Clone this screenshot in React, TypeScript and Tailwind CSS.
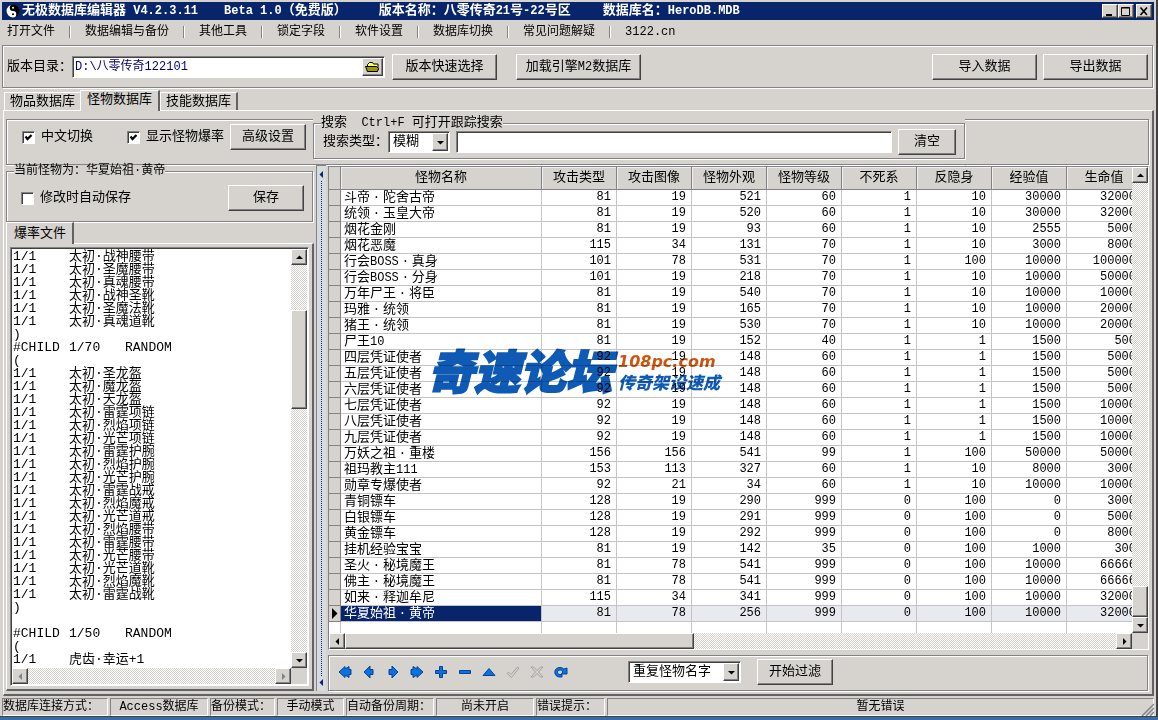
import { useState, type ReactNode } from "react";

type Monster = [string, number, number, number, number, number, number, number, number];

const columns = ["怪物名称", "攻击类型", "攻击图像", "怪物外观", "怪物等级", "不死系", "反隐身", "经验值", "生命值"];

const monsters: Monster[] = [
  ["斗帝·陀舍古帝", 81, 19, 521, 60, 1, 10, 30000, 32000],
  ["统领·玉皇大帝", 81, 19, 520, 60, 1, 10, 30000, 32000],
  ["烟花金刚", 81, 19, 93, 60, 1, 10, 2555, 5000],
  ["烟花恶魔", 115, 34, 131, 70, 1, 10, 3000, 8000],
  ["行会BOSS·真身", 101, 78, 531, 70, 1, 100, 10000, 100000],
  ["行会BOSS·分身", 101, 19, 218, 70, 1, 10, 10000, 50000],
  ["万年尸王·将臣", 81, 19, 540, 70, 1, 10, 10000, 10000],
  ["玛雅·统领", 81, 19, 165, 70, 1, 10, 10000, 20000],
  ["猪王·统领", 81, 19, 530, 70, 1, 10, 10000, 20000],
  ["尸王10", 81, 19, 152, 40, 1, 1, 1500, 500],
  ["四层凭证使者", 92, 19, 148, 60, 1, 1, 1500, 5000],
  ["五层凭证使者", 92, 19, 148, 60, 1, 1, 1500, 5000],
  ["六层凭证使者", 92, 19, 148, 60, 1, 1, 1500, 5000],
  ["七层凭证使者", 92, 19, 148, 60, 1, 1, 1500, 10000],
  ["八层凭证使者", 92, 19, 148, 60, 1, 1, 1500, 10000],
  ["九层凭证使者", 92, 19, 148, 60, 1, 1, 1500, 10000],
  ["万妖之祖·重楼", 156, 156, 541, 99, 1, 100, 50000, 50000],
  ["祖玛教主111", 153, 113, 327, 60, 1, 10, 8000, 3000],
  ["勋章专爆使者", 92, 21, 34, 60, 1, 10, 10000, 10000],
  ["青铜镖车", 128, 19, 290, 999, 0, 100, 0, 3000],
  ["白银镖车", 128, 19, 291, 999, 0, 100, 0, 5000],
  ["黄金镖车", 128, 19, 292, 999, 0, 100, 0, 8000],
  ["挂机经验宝宝", 81, 19, 142, 35, 0, 100, 1000, 300],
  ["圣火·秘境魔王", 81, 78, 541, 999, 0, 100, 10000, 66666],
  ["佛主·秘境魔王", 81, 78, 541, 999, 0, 100, 10000, 66666],
  ["如来·释迦牟尼", 115, 34, 341, 999, 0, 100, 10000, 32000],
  ["华夏始祖·黄帝", 81, 78, 256, 999, 0, 100, 10000, 32000],
];

const drops = (names: string[]) => names.map((n) => `1/1\t${n}`);

const dropFile = [
  ...drops(["太初·战神腰带", "太初·圣魔腰带", "太初·真魂腰带", "太初·战神圣靴", "太初·圣魔法靴", "太初·真魂道靴"]),
  ")",
  "#CHILD\t1/70\tRANDOM",
  "(",
  ...drops([
    "太初·圣龙盔", "太初·魔龙盔", "太初·天龙盔",
    "太初·雷霆项链", "太初·烈焰项链", "太初·光芒项链",
    "太初·雷霆护腕", "太初·烈焰护腕", "太初·光芒护腕",
    "太初·雷霆战戒", "太初·烈焰魔戒", "太初·光芒道戒",
    "太初·烈焰腰带", "太初·雷霆腰带", "太初·光芒腰带",
    "太初·光芒道靴", "太初·烈焰魔靴", "太初·雷霆战靴",
  ]),
  ")",
  "",
  "#CHILD\t1/50\tRANDOM",
  "(",
  ...drops(["虎齿·幸运+1"]),
].join("\n");

const menus = ["打开文件", "数据编辑与备份", "其他工具", "锁定字段", "软件设置", "数据库切换", "常见问题解疑", "3122.cn"];

const raised =
  "bg-[#d6d3ce] border border-t-white border-l-white border-r-[#424142] border-b-[#424142] shadow-[inset_-1px_-1px_0_#848284]";
const sunken =
  "border border-t-[#848284] border-l-[#848284] border-r-white border-b-white shadow-[inset_1px_1px_0_#424142]";
const etched = "border border-[#848284] shadow-[1px_1px_0_#fff,inset_1px_1px_0_#fff]";
const hatch =
  "bg-[conic-gradient(#fff_25%,#d6d3ce_0_50%,#fff_0_75%,#d6d3ce_0)] bg-[length:2px_2px]";

// Latin runs are one size smaller than the Chinese, the dot takes a full cell
function Mixed({ text }: { text: string }) {
  return (
    <>
      {text.split(/([\x20-\x7e]+|·)/).map((part, i) => {
        if (part === "·") return <span key={i} className="inline-block w-[13px] text-center leading-none">·</span>;
        if (/^[\x20-\x7e]+$/.test(part)) return <span key={i} className="whitespace-pre text-[12px] leading-none">{part}</span>;
        return part;
      })}
    </>
  );
}

function Button({ className = "", children }: { className?: string; children: ReactNode }) {
  return (
    <button type="button" className={`${raised} h-[26px] shrink-0 whitespace-nowrap text-[13px] leading-[20px] ${className}`}>
      {children}
    </button>
  );
}

const arrowPoints = {
  up: "3,8 10,8 6.5,4.5",
  down: "3,5 10,5 6.5,8.5",
  left: "8,3 8,10 4.5,6.5",
  right: "5,3 5,10 8.5,6.5",
};

function Arrow({ dir, color = "#000" }: { dir: keyof typeof arrowPoints; color?: string }) {
  return (
    <svg width="13" height="13" viewBox="0 0 13 13" className="shrink-0" aria-hidden="true">
      <polygon points={arrowPoints[dir]} fill={color} />
    </svg>
  );
}

function ScrollButton({ dir, disabled = false }: { dir: keyof typeof arrowPoints; disabled?: boolean }) {
  return (
    <button
      type="button"
      disabled={disabled}
      aria-label={dir}
      className={`${raised} flex size-4 shrink-0 items-center justify-center overflow-hidden`}
    >
      <Arrow dir={dir} color={disabled ? "#848284" : "#000"} />
    </button>
  );
}

function Check({ label, defaultChecked = false }: { label: string; defaultChecked?: boolean }) {
  return (
    <label className="flex items-center gap-[6px] whitespace-nowrap text-[13px]">
      <span className="relative flex">
        <input
          type="checkbox"
          defaultChecked={defaultChecked}
          className={`${sunken} peer size-[13px] appearance-none bg-white`}
        />
        <svg
          className="pointer-events-none absolute inset-0 hidden peer-checked:block"
          width="13" height="13" viewBox="0 0 13 13" fill="none" aria-hidden="true"
        >
          <path d="M3.5 5.5 5.5 8 9.5 4" stroke="#000" strokeWidth="2.2" />
        </svg>
      </span>
      {label}
    </label>
  );
}

function Combo({ label, options, className }: { label: string; options: string[]; className: string }) {
  return (
    <div className={`${sunken} relative flex h-[22px] shrink-0 bg-white p-px ${className}`}>
      <select aria-label={label} className="w-full appearance-none pl-[3px] text-[13px] leading-[18px] outline-none">
        {options.map((o) => (
          <option key={o}>{o}</option>
        ))}
      </select>
      <span className={`${raised} pointer-events-none absolute inset-y-px right-px flex w-4 items-center justify-center`}>
        <Arrow dir="down" />
      </span>
    </div>
  );
}

function TitleBar() {
  const box = `${raised} flex h-[14px] w-4 items-center justify-center`;
  return (
    <header className="flex h-[18px] items-center whitespace-nowrap bg-[#08246b] pl-1 pr-[2px] text-[13px] font-bold leading-[18px] text-white">
      <svg width="14" height="14" viewBox="0 0 14 14" className="mr-[2px] shrink-0" aria-hidden="true">
        <circle cx="7" cy="7" r="6.5" fill="#000" />
        <path d="M7 .5a6.500 6.500 0 0 0 0 13 3.250 3.250 0 0 0 0-6.500 3.250 3.250 0 0 1 0-6.500Z" fill="#fff" />
        <circle cx="7" cy="3.800" r="1" fill="#fff" />
        <circle cx="7" cy="10.200" r="1" fill="#000" />
      </svg>
      <h1 className="flex">
        <span><Mixed text="无极数据库编辑器 V4.2.3.11" /></span>
        <span className="ml-[26px]"><Mixed text="Beta 1.0（免费版）" /></span>
        <span className="ml-8"><Mixed text="版本名称：八零传奇21号-22号区" /></span>
        <span className="ml-8"><Mixed text="数据库名：HeroDB.MDB" /></span>
      </h1>
      <div className="ml-auto flex">
        <button type="button" aria-label="最小化" className={box}>
          <svg width="10" height="10"><rect x="1" y="8" width="6" height="2" fill="#000" /></svg>
        </button>
        <button type="button" aria-label="最大化" className={box}>
          <svg width="10" height="10" fill="none" stroke="#000">
            <path d="M.5 1.500h8v8h-8zM.5 2h8" />
          </svg>
        </button>
        <button type="button" aria-label="关闭" className={`${box} ml-[2px]`}>
          <svg width="10" height="10"><path d="M1.500 1.500 8 9M8 1.500 1.500 9" stroke="#000" strokeWidth="1.600" /></svg>
        </button>
      </div>
    </header>
  );
}

function Menu() {
  return (
    <nav className="flex h-[23px] items-center text-[12px] leading-5">
      {menus.map((m, i) => (
        <div key={m} className="flex items-center">
          {i > 0 && <span className="h-3 w-[2px] border-l border-r border-l-[#848284] border-r-white" />}
          <button type="button" className={`whitespace-nowrap pr-[14px] ${i === 0 ? "pl-[5px]" : "pl-[14px]"}`}>{m}</button>
        </div>
      ))}
    </nav>
  );
}

function Toolbar() {
  return (
    <div className={`${etched} mt-[2px] mr-px flex h-[43px] items-center px-1`}>
      <label htmlFor="dir" className="whitespace-nowrap text-[13px]">版本目录：</label>
      <div className={`${sunken} flex h-[22px] w-[313px] bg-white p-px`}>
        <input id="dir" defaultValue="D:\八零传奇122101" className="min-w-0 flex-1 pl-px text-[12px] text-[#00007b] outline-none" />
        <button type="button" aria-label="浏览" className={`${raised} flex w-[21px] items-center justify-center`}>
          <svg width="15" height="12" viewBox="0 0 15 12" aria-hidden="true">
            <path d="M2.500 10.500v-7l2-2h3l1 1.500h4.500v6" fill="#ffff63" stroke="#000" />
            <path d="M2.500 10.500 .5 5.500h11l2 2-1 3Z" fill="#9c9a00" stroke="#000" />
          </svg>
        </button>
      </div>
      <Button className="ml-[7px] w-[105px]">版本快速选择</Button>
      <Button className="ml-[19px] w-[125px]"><Mixed text="加载引擎M2数据库" /></Button>
      <Button className="ml-auto w-[105px]">导入数据</Button>
      <Button className="ml-[6px] w-[105px]">导出数据</Button>
    </div>
  );
}

function PageTabs() {
  const [active, setActive] = useState(1);
  return (
    <div role="tablist" className="mt-[2px] flex h-5 items-end pl-[2px] text-[13px]">
      {["物品数据库", "怪物数据库", "技能数据库"].map((t, i) => (
        <button
          key={t}
          type="button"
          role="tab"
          aria-selected={i === active}
          onClick={() => setActive(i)}
          className={`whitespace-nowrap border-l border-t border-l-white border-t-white border-r-[#636163] leading-[15px] ${
            i === active ? "relative z-10 -mb-px h-[21px] border-r-2 bg-[#d6d3ce] px-[6px] pb-1" : "h-[18px] px-[5px]"
          } ${i > active ? "border-r-2" : ""}`}
        >
          {t}
        </button>
      ))}
    </div>
  );
}

function TopRow() {
  return (
    <div className="flex h-[54px] items-end">
      <div className="flex h-[46px] w-[307px] shrink-0 items-start border-b border-l border-t border-[#848284] pl-[15px] pt-1 shadow-[0_1px_0_#fff,inset_1px_1px_0_#fff]">
        <div className="flex h-[26px] items-center gap-[6px]">
          <Check label="中文切换" defaultChecked />
          <div className="w-[22px]" />
          <Check label="显示怪物爆率" defaultChecked />
          <Button className="w-[76px]">高级设置</Button>
        </div>
      </div>
      <div className="h-full min-w-0 flex-1 border-b border-[#848284] pt-[6px] shadow-[0_1px_0_#fff]">
        <fieldset className={`${etched} h-[42px] px-2`}>
          <legend className="-ml-px bg-[#d6d3ce] text-[13px] leading-[12px]">
            <Mixed text="搜索  Ctrl+F 可打开跟踪搜索" />
          </legend>
          <div className="flex items-center">
            <label htmlFor="keyword" className="whitespace-nowrap pl-px text-[13px]">搜索类型：</label>
            <Combo label="搜索类型" options={["模糊", "精确"]} className="w-[62px]" />
            <input id="keyword" className={`${sunken} ml-[6px] h-[22px] min-w-0 flex-1 bg-white px-1 text-[13px] outline-none`} />
            <Button className="ml-[6px] w-[58px]">清空</Button>
          </div>
        </fieldset>
      </div>
      <div className="h-[46px] w-[184px] shrink-0 border-b border-r border-t border-[#848284] shadow-[1px_1px_0_#fff,inset_0_1px_0_#fff]" />
    </div>
  );
}

function DropPanel() {
  return (
    <div className="flex w-[308px] shrink-0 flex-col">
      <fieldset className={`${etched} mr-px h-[57px] pl-[7px] pr-2`}>
        <legend className="bg-[#d6d3ce] text-[12px] leading-[12px]">当前怪物为：华夏始祖·黄帝</legend>
        <div className="flex items-center justify-between pl-[7px] pt-2">
          <Check label="修改时自动保存" />
          <Button className="w-[76px]">保存</Button>
        </div>
      </fieldset>
      <div role="tablist" className="flex h-[21px]">
        <button
          type="button"
          role="tab"
          aria-selected="true"
          className="relative z-10 -mb-px border-l border-r-2 border-t border-l-white border-r-[#636163] border-t-white bg-[#d6d3ce] pl-[7px] pr-[6px] text-[13px] leading-[18px]"
        >
          爆率文件
        </button>
      </div>
      <div className="flex flex-1 border-b-2 border-l border-r-2 border-t border-b-[#636163] border-l-white border-r-[#636163] border-t-white p-[3px]">
        <div className={`${sunken} grid flex-1 grid-cols-[1fr_16px] grid-rows-[1fr_16px] bg-white p-px`}>
          <textarea
            aria-label="爆率文件"
            spellCheck={false}
            wrap="off"
            defaultValue={dropFile}
            className="h-full w-full resize-none overflow-hidden px-px pt-px text-[13px] leading-[13px] outline-none [tab-size:56px]"
          />
          <div className="flex flex-col">
            <ScrollButton dir="up" />
            <div className={`${hatch} h-[45px]`} />
            <div className={`${raised} h-[99px]`} />
            <div className={`${hatch} flex-1`} />
            <ScrollButton dir="down" />
          </div>
          <div className="flex">
            <ScrollButton dir="left" disabled />
            <div className={`${hatch} flex-1`} />
            <ScrollButton dir="right" disabled />
          </div>
          <div className="bg-[#d6d3ce]" />
        </div>
      </div>
    </div>
  );
}

function Splitter() {
  return (
    <div className="mx-[2px] flex w-[10px] shrink-0 flex-col items-center border-l border-t border-[#848284] bg-[#d6dbe0] py-[2px]">
      <Arrow dir="left" color="#08246b" />
      <div className="flex-1 border-l border-dotted border-[#08246b]" />
      <Arrow dir="left" color="#08246b" />
    </div>
  );
}

function MonsterTable() {
  const [selected, setSelected] = useState(monsters.length - 1);
  const gutter = "border-b border-r border-[#848284] bg-[#d6d3ce] p-0";
  return (
    <table className="w-full min-w-[813px] table-fixed border-separate border-spacing-0">
      <colgroup>
        <col className="w-3" />
        <col className="w-[201px]" />
        {columns.slice(1).map((c) => (
          <col key={c} className="w-[75px]" />
        ))}
      </colgroup>
      <thead>
        <tr>
          <th className={gutter} />
          {columns.map((c) => (
            <th
              key={c}
              className="h-[23px] border-b border-r border-[#848284] bg-[#d6d3ce] p-0 text-[13px] font-normal leading-[20px] shadow-[inset_1px_1px_0_#efefef]"
            >
              {c}
            </th>
          ))}
        </tr>
      </thead>
      <tbody>
        {monsters.map(([name, ...values], row) => {
          const on = row === selected;
          return (
            <tr key={name} onClick={() => setSelected(row)} className={on ? "bg-[#e7ebf0]" : "bg-white"}>
              <td className={gutter}>
                {on && (
                  <svg width="10" height="11" viewBox="0 0 10 11" className="block" aria-hidden="true">
                    <polygon points="3,0 3,11 8.5,5.5" fill="#000" />
                  </svg>
                )}
              </td>
              <td
                className={`h-4 whitespace-nowrap border-b border-r border-[#c6c3c6] py-0 pl-[3px] pr-0 text-[13px] leading-[15px] ${
                  on ? "bg-[#08246b] text-white" : ""
                }`}
              >
                <Mixed text={name} />
              </td>
              {values.map((v, i) => (
                <td key={i} className="border-b border-r border-[#c6c3c6] py-0 pl-0 pr-[5px] text-right text-[12px] leading-[15px]">
                  {v}
                </td>
              ))}
            </tr>
          );
        })}
        <tr className="h-[11px]">
          <td className="border-r border-[#c6c3c6] p-0" />
          {columns.map((c) => (
            <td key={c} className="border-r border-[#c6c3c6] p-0" />
          ))}
        </tr>
      </tbody>
    </table>
  );
}

function Watermark() {
  return (
    <div className="pointer-events-none absolute left-[99px] top-[177px] flex items-center gap-[6px] whitespace-nowrap font-bold italic mix-blend-multiply">
      <span className="font-['Noto_Sans_CJK_SC',sans-serif] text-[46px] font-black leading-[50px] text-[#0e5ab5] [-webkit-text-stroke:2px_#0e5ab5]">奇速论坛</span>
      <span className="flex flex-col pt-2">
        <span className="font-['DejaVu_Sans',sans-serif] text-[16px] leading-[18px] text-[#ce5510]">108pc.com</span>
        <span className="font-['Noto_Sans_CJK_SC',sans-serif] text-[17px] font-black leading-[22px] text-[#0e5ab5]">传奇架设速成</span>
      </span>
    </div>
  );
}

const left = "M8 1 2 7l6 6V9.500h3v-5H8Z";
const right = "M6 1l6 6-6 6V9.500H3v-5h3Z";

const navIcons: { label: string; icon: ReactNode; off?: boolean }[] = [
  { label: "首条", icon: <path d="M7 1.500 1 7l6 5.500V10l4 2.500v-3h2v-5h-2v-3L7 4Z" /> },
  { label: "上一条", icon: <path d={left} /> },
  { label: "下一条", icon: <path d={right} /> },
  { label: "末条", icon: <path d="M7 1.500 13 7l-6 5.500V10l-4 2.500v-3H1v-5h2v-3L7 4Z" /> },
  { label: "新增", icon: <path d="M5.500 1.500h3v4h4v3h-4v4h-3v-4h-4v-3h4Z" /> },
  { label: "删除", icon: <path d="M1.500 5.500h11v3h-11Z" /> },
  { label: "编辑", icon: <path d="M7 3.500 13 10.500H1Z" /> },
  { label: "提交", icon: <path d="M1 8.500 2.500 7l2.500 2.500L11.500 2 13 3 5.500 12.500Z" />, off: true },
  { label: "取消", icon: <path d="M1 2h2.500L7 5.500 10.500 2H13L8.500 7l4.500 5h-2.500L7 8.500 3.500 12H1l4.500-5Z" />, off: true },
  { label: "刷新", icon: <path d="M8 12H5.500C3 12 .8 10 .8 7.200S3 2.500 6 2.500c1.800 0 3 .6 3.800 1.500l3.200-1v6H7.500l1.300-2C8 5.500 7 5 6 5 4.500 5 3.500 6 3.500 7.300s1 2.200 2.500 2.200h2Z" /> },
];

function Navigator() {
  return (
    <div className={`${etched} mt-[5px] mr-px flex h-9 items-center pb-[2px] pl-1`}>
      <div className="flex">
        {navIcons.map(({ label, icon, off }) => (
          <button key={label} type="button" aria-label={label} disabled={off} className="flex h-6 w-6 items-center justify-center">
            <svg
              width="14" height="14" viewBox="0 0 14 14" strokeLinejoin="round" aria-hidden="true"
              className={off ? "fill-none stroke-[#a5a2a5]" : "fill-[#0873de] stroke-[#08419c]"}
            >
              {icon}
            </svg>
          </button>
        ))}
      </div>
      <Combo label="过滤条件" options={["重复怪物名字"]} className="ml-[55px] w-[113px]" />
      <Button className="ml-4 w-[76px]">开始过滤</Button>
    </div>
  );
}

function DataGrid() {
  return (
    <div className="flex min-w-0 flex-1 flex-col pt-px">
      <div className="relative border border-b-white border-l-[#848284] border-r-white border-t-[#848284] bg-white">
        <div className="flex">
          <div className="min-w-0 flex-1 overflow-hidden">
            <MonsterTable />
          </div>
          <div className="flex w-4 shrink-0 flex-col">
            <ScrollButton dir="up" />
            <div className={`${hatch} flex-1`} />
            <div className={`${raised} h-[31px]`} />
            <ScrollButton dir="down" />
          </div>
        </div>
        <div className="flex bg-[#d6d3ce] pr-4">
          <ScrollButton dir="left" />
          <div className={`${raised} w-[349px]`} />
          <div className={`${hatch} flex-1`} />
          <ScrollButton dir="right" />
        </div>
        <Watermark />
      </div>
      <Navigator />
    </div>
  );
}

function StatusBar() {
  const cell =
    "h-[18px] shrink-0 whitespace-nowrap border border-b-white border-l-[#848284] border-r-white border-t-[#848284] leading-[16px]";
  return (
    <footer className="relative mt-[2px] flex gap-[2px] text-[12px]">
      <div className={`${cell} w-[106px]`}>数据库连接方式：</div>
      <div className={`${cell} w-[98px] text-center`}>Access数据库</div>
      <div className={`${cell} w-[65px]`}>备份模式：</div>
      <div className={`${cell} w-[67px] text-center`}>手动模式</div>
      <div className={`${cell} w-[88px]`}>自动备份周期：</div>
      <div className={`${cell} w-[98px] text-center`}>尚未开启</div>
      <div className={`${cell} w-[69px]`}>错误提示：</div>
      <div className={`${cell} flex-1 text-center`}>暂无错误</div>
      <svg width="13" height="13" className="absolute bottom-0 right-0" stroke="#848284" strokeWidth="1.500" aria-hidden="true">
        <path d="M1 13 13 1M5 13 13 5M9 13 13 9" />
      </svg>
    </footer>
  );
}

export default function App() {
  return (
    <div className="flex min-h-screen flex-col bg-[#396da5] pb-[3px] font-['Liberation_Mono','Noto_Sans_CJK_SC',monospace] text-black">
      <div className="flex flex-1 flex-col border-b border-r-2 border-[#424142] bg-[#d6d3ce] pl-[2px] pr-[2px] pt-[2px]">
        <TitleBar />
        <Menu />
        <Toolbar />
        <PageTabs />
        <main className="ml-px flex flex-1 flex-col border-b-2 border-l border-r-2 border-t border-b-[#636163] border-l-white border-r-[#636163] border-t-white pb-[3px] pl-[2px] pr-[3px]">
          <TopRow />
          <div className="flex flex-1">
            <DropPanel />
            <Splitter />
            <DataGrid />
          </div>
        </main>
        <StatusBar />
      </div>
    </div>
  );
}
